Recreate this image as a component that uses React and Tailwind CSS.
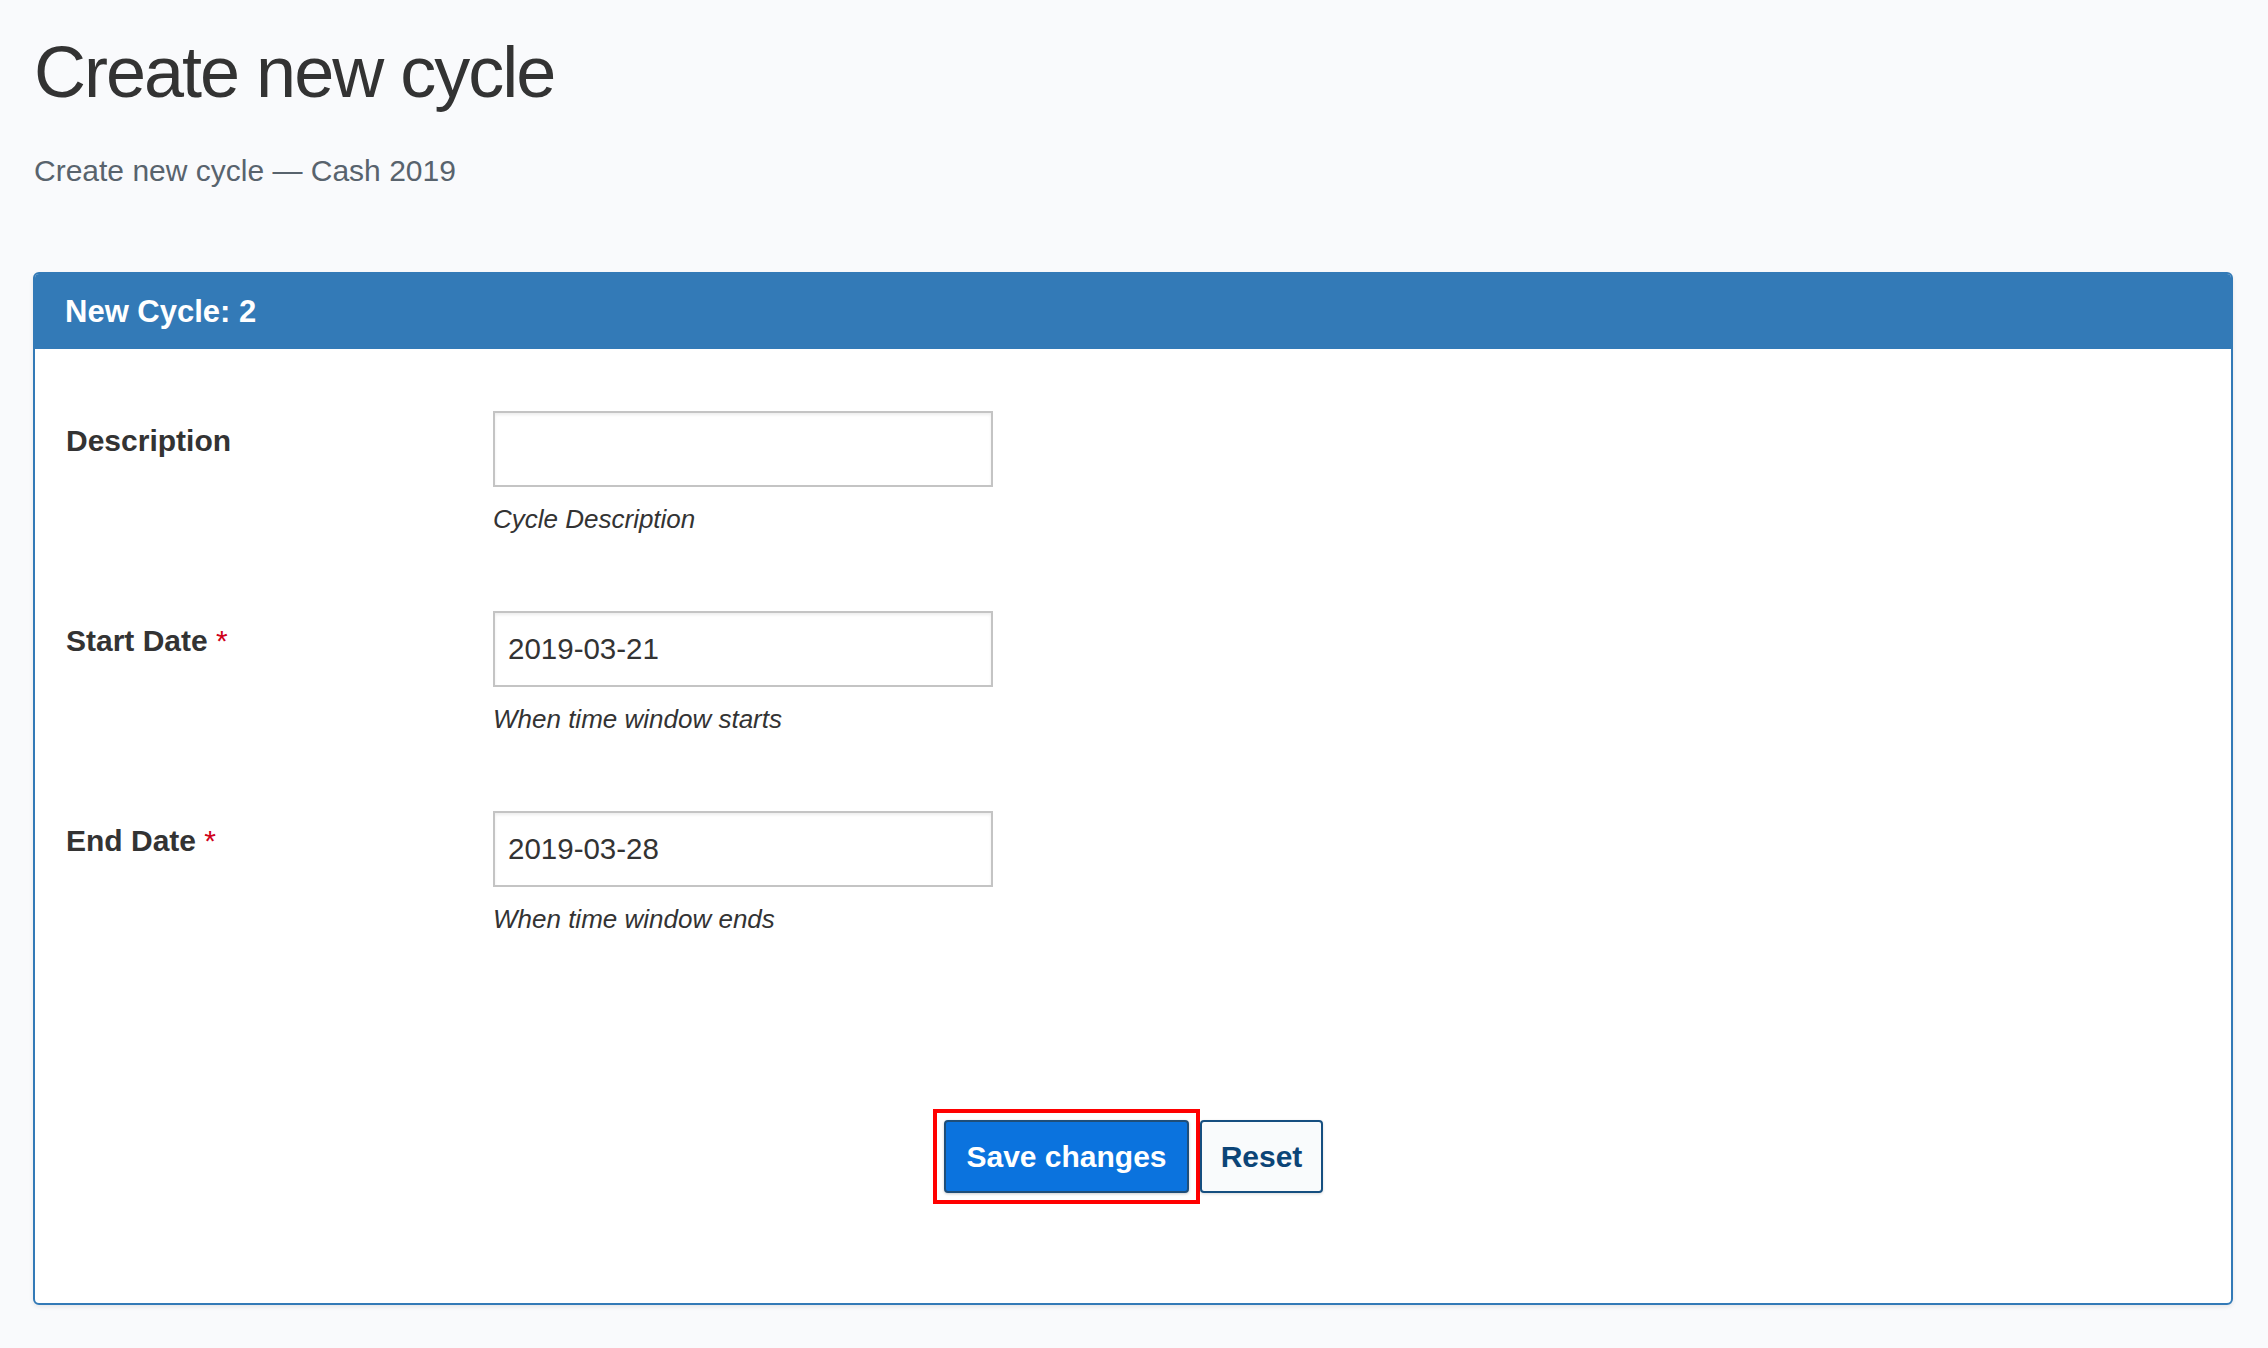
export default function App() {
  const rows = [
    { label: "Description", required: false, value: "", help: "Cycle Description" },
    { label: "Start Date", required: true, value: "2019-03-21", help: "When time window starts" },
    { label: "End Date", required: true, value: "2019-03-28", help: "When time window ends" },
  ];
  return (
    <div className="min-h-screen bg-[#f9fafc] font-['Liberation_Sans',Arial,sans-serif] pl-[33px] pr-[35px] pt-[36px] pb-[43px]">
      <h1 className="text-[72px] leading-[72px] tracking-[-2px] text-[#333333] font-normal pl-[1px]">
        Create new cycle
      </h1>
      <p className="mt-[48px] text-[30px] leading-[29px] text-[#58636d] pl-[1px]">
        Create new cycle — Cash 2019
      </p>
      <div className="mt-[87px] border-2 border-[#337ab7] rounded-[6px] bg-white shadow-[0_2px_4px_rgba(0,0,0,0.08)] overflow-hidden">
        <div className="bg-[#337ab7] h-[75px] px-[30px] text-white font-bold text-[31px] leading-[75px]">
          New Cycle: 2
        </div>
        <div className="pt-[62px] pb-[99px] pl-[31px] pr-[41px]">
          <div className="flex flex-col gap-[77px]">
            {rows.map((r) => (
              <div key={r.label} className="flex">
                <div className="w-[427px] pt-[12px] text-[30px] leading-[36px] font-bold text-[#333333]">
                  {r.label}
                  {r.required && <span className="font-normal text-[#d0021b]"> *</span>}
                </div>
                <div className="flex flex-col">
                  <input
                    readOnly
                    value={r.value}
                    className="w-[500px] h-[76px] border-2 border-[#c4c4c4] bg-white px-[13px] text-[29.5px] text-[#333333] shadow-[inset_0_2px_3px_rgba(0,0,0,0.07)] outline-none font-['Liberation_Sans',Arial,sans-serif]"
                  />
                  <div className="mt-[17px] text-[26px] leading-[30px] italic text-[#333333]">{r.help}</div>
                </div>
              </div>
            ))}
          </div>
          <div className="mt-[175px] flex justify-center items-center">
            <div className="border-4 border-[#ff0000] p-[7px]">
              <button className="w-[245px] h-[73px] bg-[#0b73de] border-2 border-[#1f4e79] rounded-[4px] text-white font-bold text-[30px] shadow-[0_1px_3px_rgba(0,0,0,0.2)]">
                Save changes
              </button>
            </div>
            <button className="w-[123px] h-[73px] bg-[#f9fbfc] border-2 border-[#164f80] rounded-[4px] text-[#0c4577] font-bold text-[30px] shadow-[0_1px_3px_rgba(0,0,0,0.15)]">
              Reset
            </button>
          </div>
        </div>
      </div>
    </div>
  );
}
